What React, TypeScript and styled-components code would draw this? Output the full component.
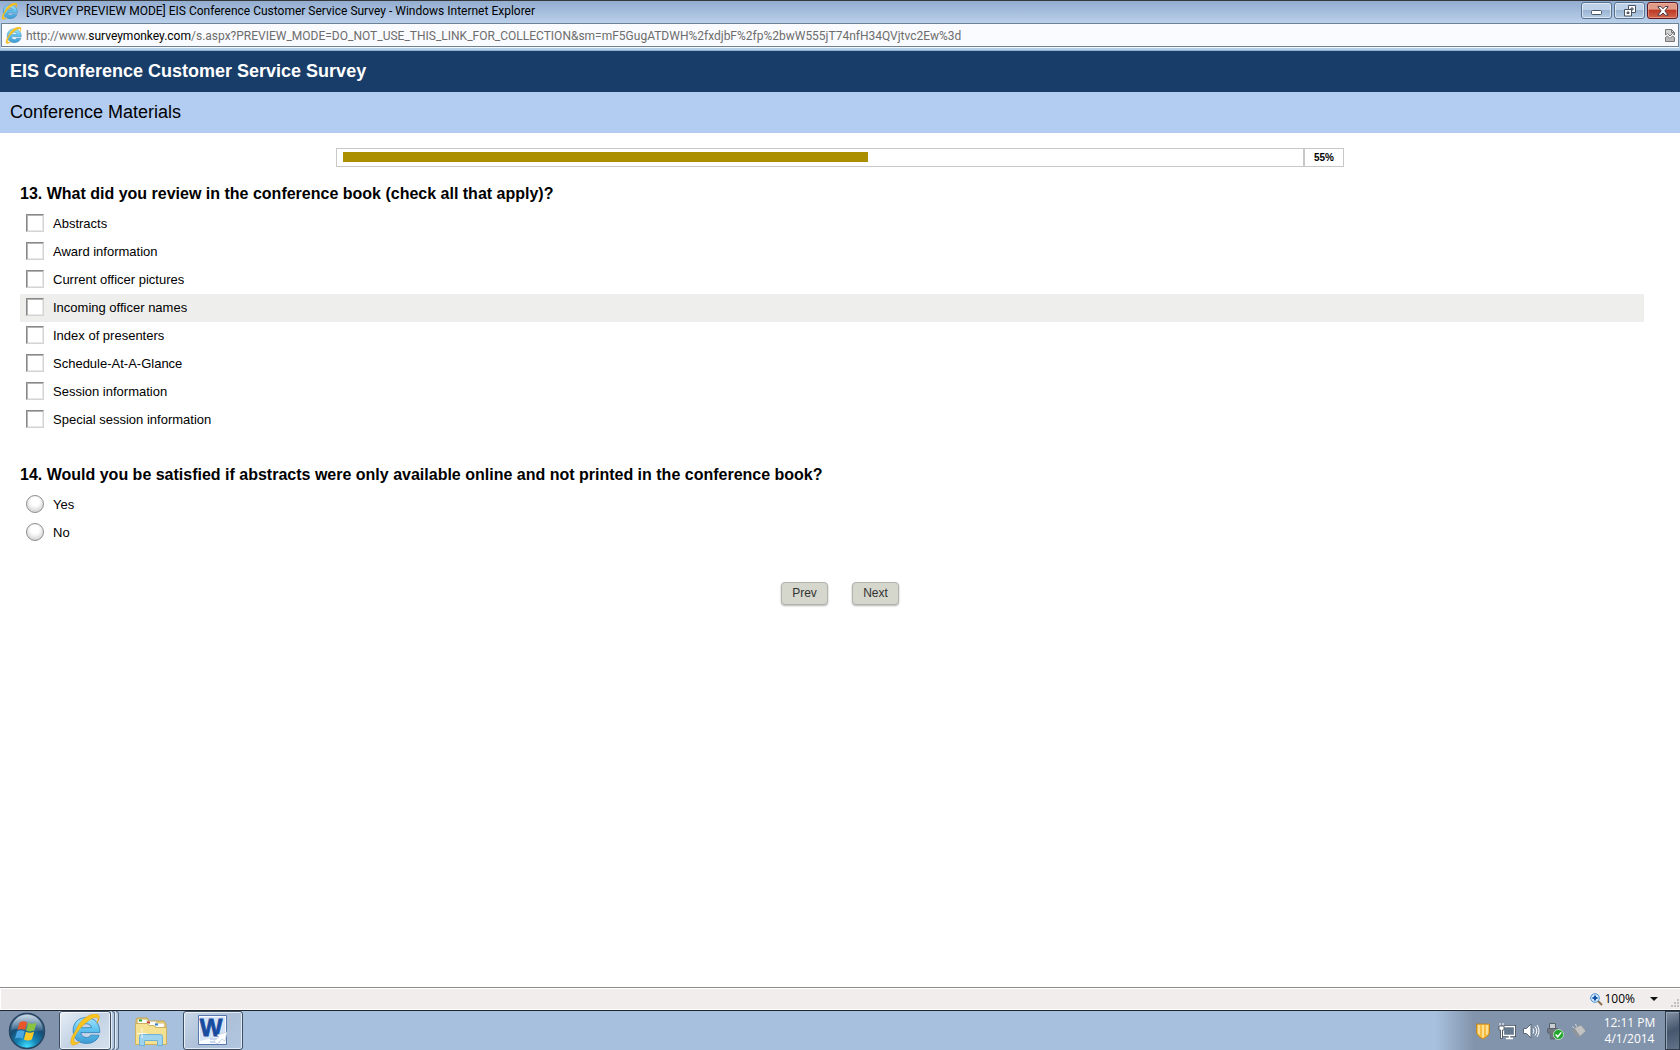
import React from "react";
import styled, { createGlobalStyle, css } from "styled-components";

const UI = `"Open Sans", "Noto Sans", sans-serif`;
const CAPTION = `Roboto, "Open Sans", sans-serif`;
const ARIAL = `"Liberation Sans", Arial, sans-serif`;

const Global = createGlobalStyle`
  *, *::before, *::after { box-sizing: border-box; }
  body { margin: 0; background: #fff; color: #000; font-family: ${ARIAL}; }
  button { font: inherit; padding: 0; cursor: pointer; }
`;

const Desktop = styled.div`
  display: flex;
  flex-direction: column;
  min-height: 100vh;
`;

/* ---------- window frame ---------- */

const TitleBar = styled.header`
  display: flex;
  align-items: center;
  gap: 8px;
  height: 23px;
  padding: 0 2px 2px 1px;
  border-top: 1px solid #37383c;
  background: linear-gradient(#93add0, #b9d0ea);
  font: 12px/20px ${CAPTION};
`;

const WindowTitle = styled.span`
  flex: 1;
  white-space: nowrap;
`;

const WindowButtons = styled.div`
  display: flex;
  gap: 2px;
  align-self: flex-start;
  padding-top: 1px;
`;

const WindowButton = styled.button<{ $close?: boolean }>`
  display: grid;
  place-items: center;
  width: 31px;
  height: 17px;
  border: 1px solid #57718f;
  border-radius: 3px;
  box-shadow: inset 0 0 0 1px rgba(255, 255, 255, 0.55);
  background: linear-gradient(#bdd2e9 0 45%, #9ab4d2 50%, #b5cde6);
  ${(p) =>
    p.$close &&
    css`
      border-color: #5c1a22;
      box-shadow: inset 0 0 0 1px rgba(255, 190, 170, 0.5);
      background: linear-gradient(#df9a88 0 40%, #bd3a24 50%, #d0674e);
    `}
`;

const AddressRow = styled.div`
  padding: 0 1px 3px;
  background: #b5cfe8;
  border-bottom: 1px solid #8fb0d0;
`;

const AddressBar = styled.div`
  display: flex;
  align-items: center;
  gap: 4px;
  height: 24px;
  padding: 1px 3px 0 3px;
  border: 1px solid #6e8296;
  box-shadow: 0 1px 0 #f4f9ff;
  background: #fafbfe;
  font: 12px/20px ${CAPTION};
`;

const Address = styled.div`
  flex: 1;
  overflow: hidden;
  white-space: nowrap;
  color: #6d6d6d;
  outline: none;
`;

const Host = styled.span`
  color: #000;
`;

const PlainButton = styled.button`
  display: grid;
  place-items: center;
  border: 0;
  background: none;
`;

/* ---------- survey page ---------- */

const Page = styled.main`
  flex: 1;
`;

const SurveyTitle = styled.h1`
  margin: 0;
  padding: 0 10px;
  background: #193d69;
  color: #fff;
  font: bold 18px/41px ${ARIAL};
`;

const PageTitle = styled.h2`
  margin: 0;
  padding: 0 10px;
  background: #b3cdf2;
  font: 18px/41px ${ARIAL};
`;

const Progress = styled.div`
  display: flex;
  width: 60%;
  height: 19px;
  margin: 15px auto 0;
  border: 1px solid #c8c8c8;
`;

const Track = styled.div`
  flex: 1;
  padding: 3px 6px;
`;

const Fill = styled.div`
  height: 10px;
  background: #ab8f00;
`;

const Percent = styled.div`
  width: 40px;
  border-left: 2px solid #c8c8c8;
  text-align: center;
  font: bold 10px/17px ${ARIAL};
`;

const Form = styled.form`
  padding: 12px 36px 0 20px;
`;

const Question = styled.fieldset`
  min-width: 0;
  margin: 0 0 26px;
  padding: 0;
  border: 0;
`;

const Prompt = styled.legend`
  padding: 0 0 2px;
  font: bold 16px/29px ${ARIAL};
`;

const Option = styled.label<{ $hovered?: boolean }>`
  display: flex;
  align-items: center;
  gap: 9px;
  height: 28px;
  padding: 0 0 2px 6px;
  font: 13px/18px ${ARIAL};
  background: ${(p) => (p.$hovered ? "#eeeeec" : "transparent")};
`;

const OptionText = styled.span`
  padding-top: 2px;
`;

const CheckBox = styled.input`
  appearance: none;
  width: 18px;
  height: 18px;
  margin: 0;
  border: 1px solid;
  border-color: #888 #d4d4d4 #d4d4d4 #888;
  box-shadow: inset 1px 1px 0 #b4b4b4, inset -1px -1px 0 #e8e8e8;
  background: #fff;
  &:checked {
    background: radial-gradient(#333 0 4px, #fff 5px);
  }
`;

const Radio = styled.input`
  appearance: none;
  width: 18px;
  height: 18px;
  margin: 0;
  border: 1px solid #8e8e8e;
  border-radius: 50%;
  background: radial-gradient(circle at 50% 35%, #fff 0 30%, #d8d8d8 75%);
  &:checked {
    background: radial-gradient(#333 0 4px, #eee 5px);
  }
`;

const Actions = styled.div`
  display: flex;
  justify-content: center;
  gap: 24px;
  padding: 9px 0 24px;
  margin-right: -16px;
`;

const NavButton = styled.button`
  width: 47px;
  height: 23px;
  padding-bottom: 2px;
  border: 1px solid #b4b4ae;
  border-radius: 4px;
  box-shadow: 0 1px 2px rgba(0, 0, 0, 0.3);
  background: #d5d6cc;
  color: #333;
  font: 12px/18px ${ARIAL};
`;

/* ---------- status bar ---------- */

const StatusBar = styled.footer`
  display: flex;
  align-items: center;
  justify-content: flex-end;
  height: 22px;
  border: solid #fff;
  border-width: 1px 0 1px 1px;
  outline: 1px solid #8b8b8b;
  background: #f0edec;
  font: 12px/20px ${UI};
`;

const Zoom = styled(PlainButton)`
  display: flex;
  align-items: center;
  gap: 1px;
`;

const Caret = styled.span`
  margin-left: 14px;
  border: 4px solid transparent;
  border-top-color: #111;
  border-bottom: 0;
`;

const Grip = styled.svg`
  margin-left: 11px;
  align-self: flex-end;
`;

/* ---------- task bar ---------- */

const TaskBar = styled.nav`
  display: flex;
  height: 40px;
  border-top: 1px solid #20262e;
  background: #a7c0dd;
`;

const StartZone = styled.div`
  display: grid;
  place-items: center;
  width: 59px;
  padding-right: 5px;
  background: #8294ad;
`;

const TaskButton = styled.button<{ $active?: boolean; $wide?: boolean }>`
  display: grid;
  place-items: center;
  width: ${(p) => (p.$wide ? 60 : 52)}px;
  padding-bottom: 2px;
  border: 1px solid #3e4e62;
  border-radius: 3px;
  box-shadow: inset 0 0 0 1px rgba(255, 255, 255, 0.65);
  background: ${(p) =>
    p.$active
      ? "linear-gradient(135deg, #e6edf5, #c3d2e4 50%, #d5e0ec)"
      : "linear-gradient(135deg, #c9d7e8, #adc0d8 50%, #b1c6df)"};
`;

const Stack = styled.span`
  width: 4px;
  border: 1px solid #5c6d83;
  border-left-color: #e5edf6;
  border-radius: 0 3px 3px 0;
  background: #b5c9e0;
`;

const Launcher = styled(PlainButton)`
  width: 64px;
`;

const Tray = styled.div`
  display: flex;
  align-items: center;
  gap: 6px;
  width: 244px;
  margin-left: auto;
  padding-left: 38px;
  background: linear-gradient(90deg, #a7c0dd, #8294ab 38px);
`;

const Clock = styled.time`
  flex: 1;
  padding-left: 6px;
  text-align: center;
  color: #fff;
  font: 12px/16px ${UI};
`;

const ShowDesktop = styled.button`
  align-self: stretch;
  width: 15px;
  border: 1px solid #2f3c4d;
  box-shadow: inset 1px 1px 0 #97a5b7;
  background: linear-gradient(160deg, #8492a5, #46566c 50%, #62738a);
`;

/* ---------- drawings ---------- */

const IeIcon = ({ size, id }: { size: number; id: string }) => (
  <svg width={size} height={size} viewBox="1 1 30 31" aria-hidden="true">
    <defs>
      <linearGradient id={id} x1="0" y1="0" x2="0" y2="1">
        <stop offset="0" stopColor="#a2e4fb" />
        <stop offset=".5" stopColor="#5cc0ee" />
        <stop offset="1" stopColor="#3e9ad2" />
      </linearGradient>
    </defs>
    <path
      d="M17 4.500C9.600 4.500 4.500 9.500 4.500 17S9.500 29.500 17.500 29.500C23.500 29.500 28 26.500 29.600 21.500H21.600C20.800 23 19.400 23.800 17.500 23.800 14.400 23.800 12.100 22 12 19H30.200C30.700 10.500 25.500 4.500 17 4.500ZM12.100 14.300C12.500 11.800 14.500 10.400 17.200 10.400S22 11.900 22.300 14.300Z"
      fill={`url(#${id})`}
      stroke="#2a7fba"
      strokeWidth="0.800"
    />
    <path
      d="M6.500 18C2.500 23.500 1.500 28.500 3 30.500 5 32 8.500 30 11 28 8 29 5.500 29 5.200 27 4.800 23 10 15 18 8.500 24 3.800 28 3 28.500 5.500 28.800 7 28 9 27.500 10 30 6.500 30.500 3 28.500 1.500 25 -.5 17 3 12 8.500 9.500 11.500 8 15 6.500 18Z"
      fill="#fbc51f"
      stroke="#e6aa1c"
      strokeWidth="0.700"
    />
  </svg>
);

const MinimizeIcon = () => (
  <svg width="12" height="8" viewBox="0 0 12 8" aria-hidden="true">
    <rect x="0.500" y="3.500" width="10" height="4" rx="1" fill="#fff" stroke="#4a5361" />
  </svg>
);

const RestoreIcon = () => (
  <svg width="14" height="12" viewBox="0 0 14 12" aria-hidden="true">
    <path fillRule="evenodd" d="M5.500.5h7v7h-7zM8 3h2v2H8z" fill="#fff" stroke="#4a5361" />
    <path fillRule="evenodd" d="M1.500 4.500h7v6.500h-7zM4 7h2v1.500H4z" fill="#fff" stroke="#4a5361" />
  </svg>
);

const CloseIcon = () => (
  <svg width="12" height="10" viewBox="0 0 12 10" aria-hidden="true">
    <path
      d="M.8.6h3.200l2 2.200 2-2.200h3.200L7.900 4.900l3.300 4.300H8L6 7 4 9.200H.8l3.300-4.300z"
      fill="#fff"
      stroke="#4c3a45"
    />
  </svg>
);

const BrokenPageIcon = () => (
  <svg width="10" height="13" viewBox="0 0 10 13" aria-hidden="true">
    <path d="M.5 6V.5h6L9.500 3.500V6L7.500 4.500 5 7 2.500 4.500z" fill="#d2d2d2" stroke="#777" />
    <path d="M6.500.5v3h3" fill="none" stroke="#777" />
    <path d="M.5 12.500V8.500l2-1.500L5 9.500 7.500 7l2 1.500v4z" fill="#bbb" stroke="#777" />
  </svg>
);

const StartOrb = () => (
  <svg width="38" height="38" viewBox="0 0 38 38" aria-hidden="true">
    <defs>
      <radialGradient id="orb" cx=".5" cy=".95" r=".85">
        <stop offset="0" stopColor="#3fe0ff" />
        <stop offset=".35" stopColor="#1483b5" />
        <stop offset=".7" stopColor="#174c74" />
        <stop offset="1" stopColor="#5e7f9e" />
      </radialGradient>
      <linearGradient id="gloss" x1="0" y1="0" x2="0" y2="1">
        <stop offset="0" stopColor="#dce9f2" stopOpacity=".85" />
        <stop offset="1" stopColor="#a9c5d8" stopOpacity=".15" />
      </linearGradient>
    </defs>
    <circle cx="19" cy="19" r="17.500" fill="url(#orb)" stroke="#294663" strokeWidth="1.500" />
    <path d="M3.500 18A15.500 15.500 0 0 1 34.500 18C26 22 12 15 3.500 18Z" fill="url(#gloss)" />
    <path d="M11.500 10.500c2.500-1.800 5-1.700 7.600-.3L17 18c-2.700-1.500-5-1.400-7.600 0z" fill="#e8562a" />
    <path d="M20.300 10.700c3 1.400 5.400 1.300 8.200-.3l-2.100 7.900c-2.700 1.400-5.300 1.500-8.200.2z" fill="#8ac341" />
    <path d="M9 19.300c2.500-1.500 5-1.500 7.700-.1l-2 7.600c-2.700-1.400-5-1.500-7.700 0z" fill="#4ba5e3" />
    <path d="M17.900 19.700c2.900 1.400 5.400 1.300 8.200-.2L24 27.200c-2.800 1.500-5.300 1.600-8.100.2z" fill="#fcc927" />
  </svg>
);

const FolderIcon = () => (
  <svg width="34" height="32" viewBox="0 0 34 32" aria-hidden="true">
    <path d="M2 5 3 3h10l2 3h15l2 3v18H2z" fill="#e6cd7c" stroke="#c4a654" />
    <path d="M4 4.500h9v5H4zM13 6.500h9v5h-9zM21 8.500h9v4h-9z" fill="#fff" stroke="#d8cfa6" strokeWidth=".6" />
    <path d="M5 4.500h3v2H5z" fill="#23a536" />
    <path d="M13 6.500h3v2h-3z" fill="#cf3e2a" />
    <path d="M21 8.500h3v2h-3z" fill="#3684d1" />
    <path d="M1.500 8.500h12l1.500 2h5l1.500 2h11v17H1.500z" fill="#f4e192" stroke="#cdb161" />
    <path d="M5.500 30.500V21.500q0-2 2-2h19q2 0 2 2v9h-5v-5h-13v5z" fill="#9fd4ee" stroke="#6fb2d6" />
    <path d="M8 13v10M3 18.500h10" stroke="#fff" opacity=".8" />
  </svg>
);

const WordIcon = () => (
  <svg width="32" height="32" viewBox="0 0 32 32" aria-hidden="true">
    <path d="M1.500 1.500h28v29h-28z" fill="#f8fbff" stroke="#5777ae" />
    <path d="M3 3h25v18L3 27z" fill="#d6e3f5" />
    <path d="M13 25h10M13 28h10" stroke="#9cb4da" />
    <text x="14" y="22" textAnchor="middle" fontFamily={`"Liberation Sans", sans-serif`} fontWeight="bold" fontSize="24" fill="#174ba0" stroke="#174ba0" strokeWidth=".8">
      W
    </text>
    <path d="M20 21l10-3-2 9-3-2-5 5-3-3 5-4z" fill="#fff" stroke="#bcc9df" strokeWidth=".7" />
  </svg>
);

const ZoomIcon = () => (
  <svg width="13" height="13" viewBox="0 0 13 13" aria-hidden="true">
    <path d="M8 8l4 4" stroke="#8a6f4d" strokeWidth="2" />
    <circle cx="5" cy="5" r="4.300" fill="#d3ecfd" stroke="#4a8fce" />
    <path d="M5 2.500v5M2.500 5h5" stroke="#1552a8" strokeWidth="2" />
  </svg>
);

const ShieldIcon = () => (
  <svg width="18" height="18" viewBox="0 0 18 18" aria-hidden="true">
    <path d="M2.500 2h13v9q-1.500 4-6.500 6-5-2-6.500-6z" fill="#f5bd42" stroke="#b77d1c" strokeWidth=".8" />
    <path d="M5 3v9.500M9 3v12.500M13 3v9.500" stroke="#fff2c2" strokeWidth="1.300" />
  </svg>
);

const NetworkIcon = () => (
  <svg width="18" height="18" viewBox="0 0 18 18" aria-hidden="true">
    <path d="M5.500 4.500h11v9h-11z" fill="#65798e" stroke="#3c4654" strokeWidth="3" />
    <path d="M5.500 4.500h11v9h-11z" fill="#65798e" stroke="#fff" strokeWidth="1.300" />
    <path d="M8 16.500h7M11.500 14v2" stroke="#fff" strokeWidth="1.500" />
    <path d="M2 1v3M5 1v3" stroke="#fff" />
    <path d="M1 4h5v4H4.500v8.500h-2V8H1z" fill="#fff" stroke="#3c4654" strokeWidth=".8" />
  </svg>
);

const SpeakerIcon = () => (
  <svg width="18" height="18" viewBox="0 0 18 18" aria-hidden="true">
    <path d="M1.500 6.500h3L9 2v14l-4.500-4.500h-3z" fill="#fff" stroke="#59687a" />
    <path d="M11 6.500q2 2.500 0 5M13 4.500q3.500 4.500 0 9M15 3q4 6 0 12" fill="none" stroke="#fff" />
  </svg>
);

const UsbIcon = () => (
  <svg width="18" height="18" viewBox="0 0 18 18" aria-hidden="true">
    <path d="M3.500 1.500h6v5h-6z" fill="#c9ccd0" stroke="#59616a" />
    <path d="M1.500 6.500h10v4l-3 2.500v4h-4v-4l-3-2.500z" fill="#70777f" stroke="#535b65" strokeWidth=".7" />
    <circle cx="12.500" cy="12.500" r="5" fill="#21a52c" stroke="#e0f5de" strokeWidth=".7" />
    <path d="M9.700 12.500l2 2.300 3.600-4.400" fill="none" stroke="#fff" strokeWidth="1.500" />
  </svg>
);

const DeviceIcon = () => (
  <svg width="18" height="18" viewBox="0 0 18 18" aria-hidden="true">
    <path d="M4 6l7-3 5 6-6 5.500z" fill="#c2c2c2" stroke="#858c94" strokeWidth=".7" />
    <path d="M4 6l6 8.500-3 .5-4.500-6z" fill="#909599" />
    <path d="M5.500 2l1 2.500M2.500 4.500L4 6" stroke="#d7d7d7" />
  </svg>
);

/* ---------- content ---------- */

const MATERIALS = [
  "Abstracts",
  "Award information",
  "Current officer pictures",
  "Incoming officer names",
  "Index of presenters",
  "Schedule-At-A-Glance",
  "Session information",
  "Special session information",
];

const PROGRESS = 55;

export default function App() {
  return (
    <Desktop>
      <Global />
      <TitleBar>
        <IeIcon size={17} id="ie-title" />
        <WindowTitle>[SURVEY PREVIEW MODE] EIS Conference Customer Service Survey - Windows Internet Explorer</WindowTitle>
        <WindowButtons>
          <WindowButton aria-label="Minimize"><MinimizeIcon /></WindowButton>
          <WindowButton aria-label="Restore"><RestoreIcon /></WindowButton>
          <WindowButton aria-label="Close" $close><CloseIcon /></WindowButton>
        </WindowButtons>
      </TitleBar>
      <AddressRow>
        <AddressBar>
          <IeIcon size={17} id="ie-address" />
          <Address role="textbox" aria-label="Address" tabIndex={0}>
            http://www.<Host>surveymonkey.com</Host>
            /s.aspx?PREVIEW_MODE=DO_NOT_USE_THIS_LINK_FOR_COLLECTION&amp;sm=mF5GugATDWH%2fxdjbF%2fp%2bwW555jT74nfH34QVjtvc2Ew%3d
          </Address>
          <PlainButton aria-label="Compatibility view"><BrokenPageIcon /></PlainButton>
        </AddressBar>
      </AddressRow>

      <Page>
        <SurveyTitle>EIS Conference Customer Service Survey</SurveyTitle>
        <PageTitle>Conference Materials</PageTitle>
        <Progress role="progressbar" aria-label="Survey progress" aria-valuenow={PROGRESS}>
          <Track>
            <Fill style={{ width: `${PROGRESS}%` }} />
          </Track>
          <Percent>{PROGRESS}%</Percent>
        </Progress>
        <Form onSubmit={(e) => e.preventDefault()}>
          <Question>
            <Prompt>13. What did you review in the conference book (check all that apply)?</Prompt>
            {MATERIALS.map((name) => (
              <Option key={name} $hovered={name === "Incoming officer names"}>
                <CheckBox type="checkbox" name="materials" value={name} />
                <OptionText>{name}</OptionText>
              </Option>
            ))}
          </Question>
          <Question>
            <Prompt>
              14. Would you be satisfied if abstracts were only available online and not printed in the conference book?
            </Prompt>
            {["Yes", "No"].map((name) => (
              <Option key={name}>
                <Radio type="radio" name="online" value={name} />
                <OptionText>{name}</OptionText>
              </Option>
            ))}
          </Question>
          <Actions>
            <NavButton type="button">Prev</NavButton>
            <NavButton type="submit">Next</NavButton>
          </Actions>
        </Form>
      </Page>

      <StatusBar>
        <Zoom aria-label="Zoom level">
          <ZoomIcon />
          100%
          <Caret />
        </Zoom>
        <Grip width="11" height="11" viewBox="0 0 11 11" aria-hidden="true">
          <path d="M8 1h2v2H8zM8 4h2v2H8zM8 7h2v2H8zM5 4h2v2H5zM5 7h2v2H5zM2 7h2v2H2z" fill="#c2bfbe" />
        </Grip>
      </StatusBar>
      <TaskBar aria-label="Taskbar">
        <StartZone>
          <PlainButton aria-label="Start"><StartOrb /></PlainButton>
        </StartZone>
        <TaskButton $active aria-label="Internet Explorer"><IeIcon size={32} id="ie-task" /></TaskButton>
        <Stack />
        <Stack />
        <Launcher aria-label="Windows Explorer"><FolderIcon /></Launcher>
        <TaskButton $wide aria-label="Word"><WordIcon /></TaskButton>
        <Tray>
          <ShieldIcon />
          <NetworkIcon />
          <SpeakerIcon />
          <UsbIcon />
          <DeviceIcon />
          <Clock>
            12:11 PM
            <br />
            4/1/2014
          </Clock>
          <ShowDesktop aria-label="Show desktop" />
        </Tray>
      </TaskBar>
    </Desktop>
  );
}
